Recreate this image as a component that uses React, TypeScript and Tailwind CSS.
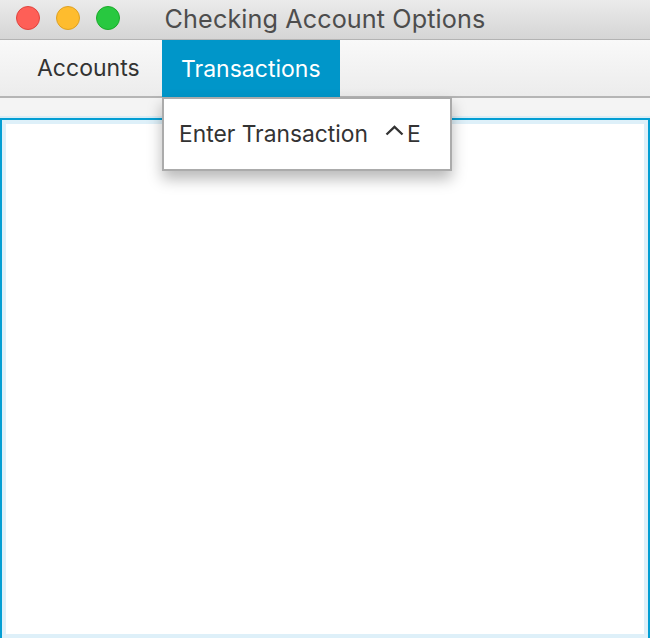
import React from "react";

const fontStack = "font-['Inter','Liberation_Sans',sans-serif]";

function TrafficLights() {
  return (
    <div className="absolute left-[16px] top-[6px] flex gap-[16px]">
      <span className="block size-[24px] rounded-full border border-[#e0443e] bg-[#fe5f57]" />
      <span className="block size-[24px] rounded-full border border-[#dea123] bg-[#febc2e]" />
      <span className="block size-[24px] rounded-full border border-[#1aab29] bg-[#28c840]" />
    </div>
  );
}

// control-key caret drawn as a chevron
function ControlCaret() {
  return (
    <svg width="19" height="11" viewBox="0 0 19 11" className="mb-[8px]">
      <path d="M1.5 9.5 L9.5 1.8 L17.5 9.5" fill="none" stroke="#333333" strokeWidth="2.3" />
    </svg>
  );
}

export default function App() {
  return (
    <div className={`relative flex h-[638px] w-[650px] flex-col overflow-hidden bg-[#f4f4f4] ${fontStack}`}>
      {/* window title bar */}
      <div className="relative flex h-[40px] shrink-0 items-center justify-center border-b border-[#b3b3b3] bg-gradient-to-b from-[#ebebeb] to-[#d5d5d5]">
        <TrafficLights />
        <span className="text-[25.2px] leading-none tracking-[0.1px] text-[#4d4d4d]">Checking Account Options</span>
      </div>

      {/* menu bar */}
      <div className="flex h-[58px] shrink-0 items-stretch border-b-2 border-[#b5b5b5] bg-gradient-to-b from-[#f9f9f9] to-[#ececec] pl-[18px] text-[23px] text-[#333333]">
        <div className="flex w-[144px] items-center px-[19px]">Accounts</div>
        <div className="-mb-[2px] flex items-center bg-[#0096c9] px-[19px] text-white">Transactions</div>
      </div>

      {/* text area */}
      <div className="mt-[20px] -mb-[2px] flex-1 border-2 border-[#039ed3] bg-white shadow-[0_-2px_0_#d9edf6]">
        <div className="h-full w-full shadow-[inset_0_0_0_4px_#def0f9]" />
      </div>

      {/* open menu popup */}
      <div className="absolute left-[162px] top-[97px] flex h-[74px] w-[290px] items-center gap-[17px] border-2 border-[#ababab] bg-white pl-[15px] text-[22.8px] text-[#333333] shadow-[0_8px_14px_rgba(0,0,0,0.28)]">
        <span>Enter Transaction</span>
        <span className="flex items-center gap-[3px]">
          <ControlCaret />
          <span>E</span>
        </span>
      </div>
    </div>
  );
}
